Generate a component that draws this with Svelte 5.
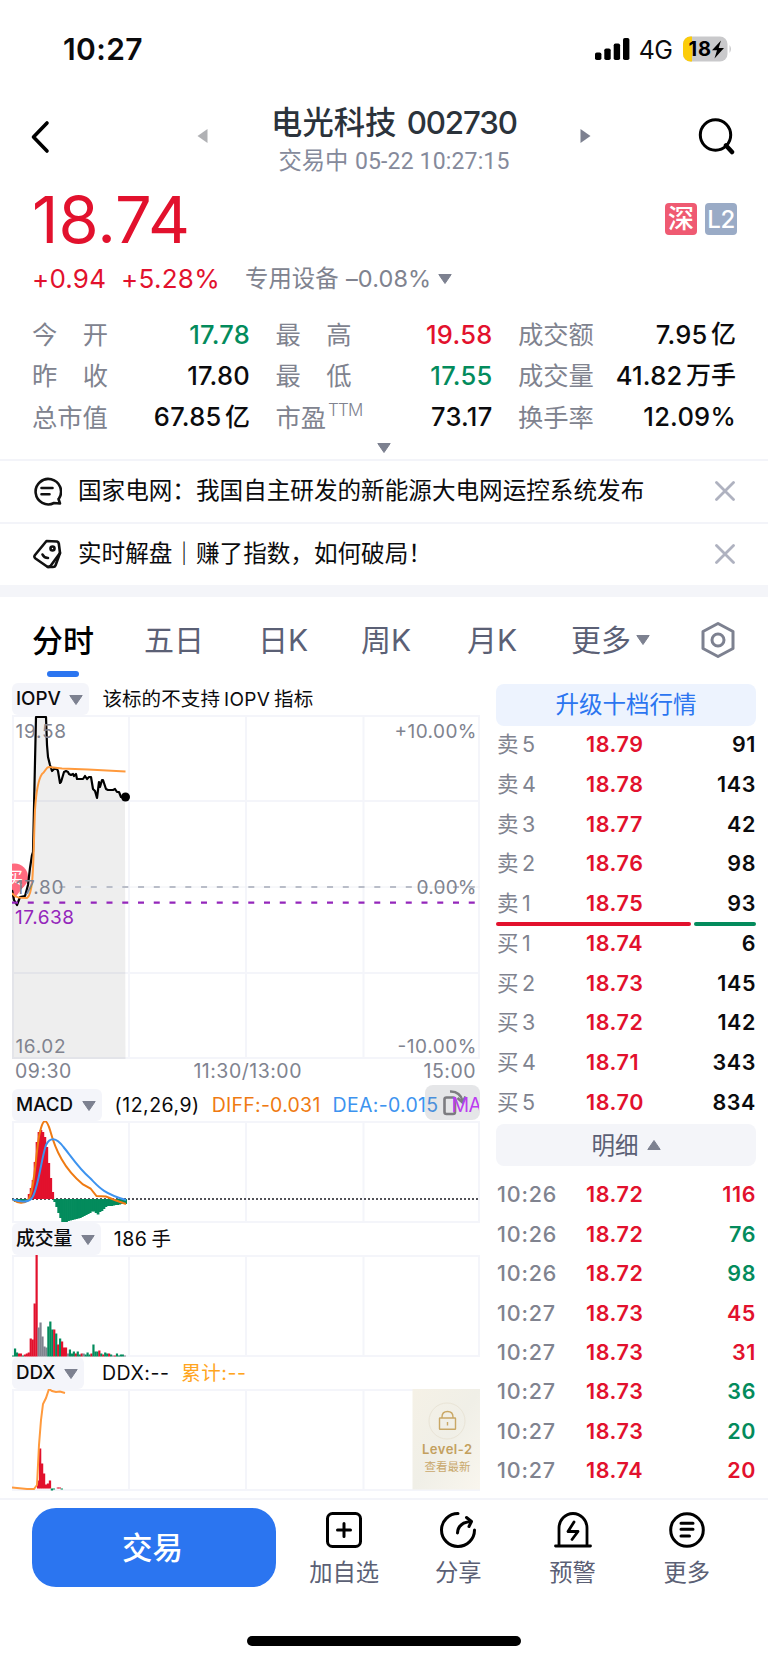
<script>
  const stats = [
    ['今开', '17.78', '', 'down'], ['最高', '19.58', '', 'up'], ['成交额', '7.95', '亿', ''],
    ['昨收', '17.80', '', ''], ['最低', '17.55', '', 'down'], ['成交量', '41.82', '万手', ''],
    ['总市值', '67.85', '亿', ''], ['市盈', '73.17', '', ''], ['换手率', '12.09%', '', '']
  ];
  const sells = [['5', '18.79', '91'], ['4', '18.78', '143'], ['3', '18.77', '42'], ['2', '18.76', '98'], ['1', '18.75', '93']];
  const buys = [['1', '18.74', '6'], ['2', '18.73', '145'], ['3', '18.72', '142'], ['4', '18.71', '343'], ['5', '18.70', '834']];
  const ticks = [
    ['10:26', '18.72', '116', 'up'], ['10:26', '18.72', '76', 'down'], ['10:26', '18.72', '98', 'down'],
    ['10:27', '18.73', '45', 'up'], ['10:27', '18.73', '31', 'up'], ['10:27', '18.73', '36', 'down'],
    ['10:27', '18.73', '20', 'down'], ['10:27', '18.74', '20', 'up']
  ];
  const RED = '#e2112d', GREEN = '#038b5c', GREY = '#80838f';
  const price = '12,890 14,900 17,905 20,897 25,896 28,885 30,868 32,855 33,852 36,717 46,717 47,745 48,757 50,765 52,771 54,769 57,769 58,771 60,783 61,782 64,772 66,771 68,772 69,774 71,775 73,774 74,776 76,774 77,779 80,779 83,779 85,776 87,779 89,777 91,777 93,789 95,791 97,798 99,782 100,787 102,780 103,780 106,789 108,790 113,790 115,789 117,792 119,792 121,797 125,797';
  // MACD bars: height above (positive) or below (negative) the zero line
  const macd = [-1, -3, -3, -4, -4, -4, -3, -2, 5, 11, 19, 37, 57, 67, 69, 67, 62, 52, 36, 21, 7, -3, -8, -14, -19, -23, -23, -23, -22, -21.5, -21, -20.5, -20, -19.5, -19, -18, -17, -16, -15, -14, -12.5, -12.5, -14, -15.5, -13, -12, -10, -8, -7, -7, -7, -6.5, -6, -6, -5.5, -5, -5, -5];
  // volume bars: colour code followed by height
  const vol = 'g1 g8 g4 r3 r3 g1 r2 r3 r4 r18 r17 r53 r102 y29 y34 y20 y10 y9 g30 g35 g27 r27 g23 r12 g18 r15 r9 r9 y3 g7 g3 g5 r3 g5 g2 r3 y3 g2 g4 g2 r3 g12 g5 g5 r6 g3 r2 g4 g3 r3 g2 y1 r1 g3 g1 g2 g2 y1'
    .split(' ').map((s) => ({ c: s[0] === 'g' ? GREEN : s[0] === 'r' ? RED : GREY, h: +s.slice(1) }));
  const ddx = [8, 40, 25, 15, 4, 5, 8, -2, -1, 0, 1, 1, -1];
</script>

{#snippet grid(y0, y1)}
  <path d={`M13 ${y0 + 1}H479M13 ${y1 - 1}H479M13 ${y0}V${y1}M129 ${y0}V${y1}M246 ${y0}V${y1}M363.500 ${y0}V${y1}M479 ${y0}V${y1}`} stroke="#f4f5fa" stroke-width="2" fill="none" />
{/snippet}
{#snippet tri()}
  <svg class="tri" width="14" height="10" viewBox="0 0 14 10"><path d="M.8.5H13.200L7 9.500Z" fill="#7d8190" stroke="#7d8190" stroke-linejoin="round" /></svg>
{/snippet}

<main>
  <div class="status">
    <b>10:27</b>
    <div class="sig">
      <svg width="36" height="24" viewBox="0 0 36 24"><rect x="0" y="15.500" width="6.400" height="7.500" rx="1.800" /><rect x="9.300" y="11.500" width="6.400" height="11.500" rx="1.800" /><rect x="18.700" y="6.500" width="6.400" height="16.500" rx="1.800" /><rect x="28" y="1" width="6.400" height="22" rx="1.800" /></svg>
      <span>4G</span>
      <svg class="bat" width="50" height="26" viewBox="0 0 50 26">
        <rect x="0" y=".5" width="44.500" height="25" rx="7.500" fill="#c9c9cb" /><path d="M7.500.5H9V25.500H7.500A7.500 7.500 0 0 1 0 18V8A7.500 7.500 0 0 1 7.500.5Z" fill="#fccc0a" /><path d="M46.500 9q3 4 0 8Z" fill="#c9c9cb" />
        <text x="5.500" y="20" font-size="20" font-weight="700" textLength="22.500">18</text><path d="M38 4.500 29 14.200H34L31.500 22.500 41 12H35.700Z" />
      </svg>
    </div>
  </div>

  <header>
    <svg class="back" width="20" height="34" viewBox="0 0 20 34"><path d="M17 3 3.500 17 17 31" fill="none" stroke="#000" stroke-width="3.600" stroke-linecap="round" stroke-linejoin="round" /></svg>
    <svg class="prev" width="11" height="14" viewBox="0 0 11 14"><path d="M10.500 0V14L.5 7Z" fill="#b0b1b4" /></svg>
    <div class="ttl">
      <h1>电光科技 <span>002730</span></h1>
      <p>交易中 <span>05-22 10:27:15</span></p>
    </div>
    <svg class="next" width="11" height="14" viewBox="0 0 11 14"><path d="M.5 0V14L10.500 7Z" fill="#7d8190" /></svg>
    <svg width="37" height="37" viewBox="0 0 37 37"><circle cx="17.500" cy="17" r="15.200" fill="none" stroke="#000" stroke-width="3" /><path d="M28 27.500 34 34" stroke="#000" stroke-width="4.500" stroke-linecap="round" /></svg>
  </header>

  <section class="quote">
    <div class="big"><strong>18.74</strong><div class="badges"><i>深</i><i class="l2">L2</i></div></div>
    <div class="chg"><span class="up a">+0.94</span><span class="up b">+5.28%</span><span class="sec">专用设备</span><span class="pct">–0.08%</span>{@render tri()}</div>
    <div class="stats">
      {#each stats as [k, v, u, c]}
        <div class="st"><span class="k">{#if k.length === 2 && k !== '市盈'}<i>{k[0]}</i><i>{k[1]}</i>{:else}{k}{/if}{#if k === '市盈'}<sup>TTM</sup>{/if}</span><span class={'v ' + c}>{v}{#if u}<em>{u}</em>{/if}</span></div>
      {/each}
    </div>
    <div class="more">{@render tri()}</div>
  </section>

  <div class="note">
    <svg width="30" height="30" viewBox="0 0 30 30" fill="none" stroke="#111" stroke-width="2.600" stroke-linecap="round" stroke-linejoin="round"><path d="M27 22.500A12.700 12.700 0 1 0 22 27L28 27.500 26.500 23" /><path d="M9.500 12H20.500M9.500 18.300H17.500" /></svg>
    <span>国家电网：我国自主研发的新能源大电网运控系统发布</span>
    <svg class="x" width="20" height="20" viewBox="0 0 20 20"><path d="M1.500 1.500 18.500 18.500M18.500 1.500 1.500 18.500" stroke="#afb2c0" stroke-width="2.800" stroke-linecap="round" /></svg>
  </div>
  <div class="note">
    <svg width="30" height="30" viewBox="0 0 30 30" fill="none" stroke="#111" stroke-width="2.600" stroke-linecap="round" stroke-linejoin="round"><path d="M14.500 2 25 2.500Q26.500 3 26.800 4.500L28 14 18.500 27Q17 28.500 15 27.500L3.500 19.500Q1.500 18 3 16Z" /><path d="M28 14 23.500 26.500Q23 28 21 28H16" /><path d="M10.500 15.500Q12 19 16 19" /><circle cx="20.500" cy="9.500" r="2" /></svg>
    <span>实时解盘｜赚了指数，如何破局！</span>
    <svg class="x" width="20" height="20" viewBox="0 0 20 20"><path d="M1.500 1.500 18.500 18.500M18.500 1.500 1.500 18.500" stroke="#afb2c0" stroke-width="2.800" stroke-linecap="round" /></svg>
  </div>
  <div class="band"></div>

  <nav>
    <span class="on">分时</span><span>五日</span><span>日K</span><span>周K</span><span>月K</span><span class="mr">更多{@render tri()}</span>
    <svg width="36" height="38" viewBox="0 0 36 38" fill="none" stroke="#7d8190" stroke-width="3"><path d="M18 2.500 33 10.500V27.500L18 35.500 3 27.500V10.500Z" stroke-linejoin="round" /><circle cx="18" cy="19" r="6" /></svg>
  </nav>

  <div class="body">
    <div class="charts">
      <div class="bar iopv"><span class="pill">IOPV{@render tri()}</span><span>该标的不支持<em class="lat">IOPV</em>指标</span></div>
      <svg width="468" height="344" viewBox="12 715 468 344">
        {@render grid(715, 1059)}
        <path d="M12 801H480M12 973H480" stroke="#f4f5fa" stroke-width="2" />
        <polygon points={price + ' 125.5,1059 12,1059'} fill="#000" fill-opacity=".068" />
        <path d="M59.300 887H480" stroke="#eef0f5" stroke-width="1" />
        <circle cx="14.500" cy="877" r="13.500" fill="#ff6a7f" /><path d="M6 886 14 899 24 886Z" fill="#ff6a7f" />
        <text x="6" y="884" font-size="17" fill="#fff">买</text>
        <polyline points={price} fill="none" stroke="#000" stroke-width="2.200" stroke-linejoin="round" />
        <path d="M12 893C15 898 20 898 27 898 34 894 33 860 35 810 36 794 38 780 42 774 46 771 46 767 49 767L62 768.500 88 769.500 125.500 771.500" fill="none" stroke="#ff9a3d" stroke-width="2" />
        <circle cx="125.500" cy="797" r="4.500" />
        <path d="M59.300 887H480" stroke="#b9bdc8" stroke-width="2" stroke-dasharray="6 9.750" />
        <path d="M12 902.700H476" stroke="#9426bb" stroke-width="2.200" stroke-dasharray="6 9.750" />
        <g font-size="19" fill="#80838f">
          <text x="15.500" y="738" textLength="50.500">19.58</text><text x="476.500" y="738" text-anchor="end" textLength="82">+10.00%</text>
          <text x="15.500" y="894" textLength="48">17.80</text><text x="476.500" y="894" text-anchor="end" textLength="60">0.00%</text>
          <text x="15" y="923.500" textLength="59" fill="#9426bb">17.638</text>
          <text x="15.500" y="1052.500" textLength="50">16.02</text><text x="476.500" y="1052.500" text-anchor="end" textLength="79">-10.00%</text>
        </g>
      </svg>
      <div class="axis"><span>09:30</span><span>11:30/13:00</span><span>15:00</span></div>
      <div class="bar macd"><span class="pill">MACD{@render tri()}</span><span>(12,26,9)</span><span class="diff">DIFF:-0.031</span><span class="dea">DEA:-0.015</span><span class="ma">MA</span>
        <div class="rot"><svg width="55" height="35" viewBox="0 0 55 35" fill="none" stroke="#7c7c80" stroke-width="2.600"><rect x="19.500" y="12.500" width="10.500" height="16.500" rx="2" /><path d="M25 6.500Q35 6 37.500 16" /><path d="M32.500 13 37.500 17.500 40.500 11.500" /></svg></div>
      </div>
      <svg width="468" height="102" viewBox="12 1121 468 102">
        {@render grid(1121, 1223)}
        <path d="M12 1199H480" stroke="#1a1a22" stroke-width="1.500" stroke-dasharray="2 2" />
        {#each macd as h, i}<rect x={12 + i * 1.97} y={h > 0 ? 1199 - h : 1199} width="2.700" height={Math.abs(h)} fill={h > 0 ? RED : GREEN} />{/each}
        <path d="M12.700 1199.500C18 1203.500 24 1204 28 1200 35 1192 36 1146 40 1132 43 1119 46 1117 50 1130 53 1141 58 1153 61.500 1159 66 1167 74 1177 83 1184.500L90.500 1188.500 96.500 1196 106 1196.500 116 1200.500 126 1204" fill="none" stroke="#ef7a12" stroke-width="2" />
        <path d="M12.700 1199.500C20 1202 28 1202.500 32 1198 38 1190 41 1160 46 1145 50 1137 56 1137 63.500 1147 70 1155 80 1170 90 1178 98 1186 102 1193 126 1200" fill="none" stroke="#3d93ef" stroke-width="2" />
      </svg>
      <div class="bar vol"><span class="pill">成交量{@render tri()}</span><span>186<em>手</em></span></div>
      <svg width="468" height="102" viewBox="12 1255 468 102">
        {@render grid(1255, 1357)}
        {#each vol as b, i}<rect x={12 + i * 1.96} y={1356.5 - b.h} width="2.200" height={b.h} fill={b.c} />{/each}
      </svg>
      <div class="bar ddx"><span class="pill">DDX{@render tri()}</span><span>DDX:--</span><span class="cum">累计:--</span></div>
      <svg width="468" height="102" viewBox="12 1389 468 102">
        <defs><linearGradient id="gold" x2="1" y2="1"><stop stop-color="#f5f1e6" /><stop offset=".5" stop-color="#f0efe7" /><stop offset="1" stop-color="#f9f6ee" /></linearGradient></defs>
        {@render grid(1389, 1491)}
        {#each ddx as h, i}<rect x={37 + i * 1.97} y={h > 0 ? 1488.500 - h : 1488.500} width="2.300" height={Math.abs(h)} fill={h > 0 ? RED : GREEN} />{/each}
        <path d="M12 1487.500 17 1488 27 1489H34L37 1485 39 1445 41 1420 43 1404 46 1398 49 1389 52 1391 56 1392 60 1391.500 65 1393" fill="none" stroke="#ff9a3d" stroke-width="2" />
        <rect x="412.500" y="1389" width="67.500" height="100.500" fill="url(#gold)" />
        <circle cx="447" cy="1421" r="18" fill="none" stroke="#e9e4d6" />
        <g fill="none" stroke="#c9a765" stroke-width="1.400"><rect x="439.500" y="1418" width="16" height="11.300" rx=".5" /><path d="M442 1418V1417Q442 1411.500 447.500 1411.500T453 1417V1418M447.500 1422V1425.500" /></g>
        <text x="422" y="1454" font-size="13" font-weight="600" fill="#c3a05e" textLength="50">Level-2</text>
        <text x="424.500" y="1471" font-size="11.500" fill="#c9a86c" textLength="46">查看最新</text>
      </svg>
    </div>

    <aside>
      <div class="btn up10">升级十档行情</div>
      {#each sells as [n, p, q]}<div class="row"><span>卖<em>{n}</em></span><b>{p}</b><b class="q">{q}</b></div>{/each}
      <div class="ratio"><i></i><i></i></div>
      {#each buys as [n, p, q]}<div class="row"><span>买<em>{n}</em></span><b>{p}</b><b class="q">{q}</b></div>{/each}
      <div class="btn det">明细<svg width="14" height="10" viewBox="0 0 14 10"><path d="M.8 9.500H13.200L7 .5Z" fill="#7d8190" stroke="#7d8190" stroke-linejoin="round" /></svg></div>
      {#each ticks as [t, p, q, c]}<div class="row tick"><span>{t}</span><b>{p}</b><b class={'q ' + c}>{q}</b></div>{/each}
    </aside>
  </div>

  <footer>
    <button>交易</button>
    <div class="act">
      <svg width="40" height="38" viewBox="0 0 40 38" fill="none" stroke="#000" stroke-width="3" stroke-linecap="round"><rect x="3.500" y="2.500" width="33" height="33" rx="5" /><path d="M20 12.500V25.500M13.500 19H26.500" /></svg><span>加自选</span>
    </div>
    <div class="act">
      <svg width="40" height="38" viewBox="0 0 40 38" fill="none" stroke="#000" stroke-width="3" stroke-linecap="round" stroke-linejoin="round"><path d="M20 2.500A16.500 16.500 0 1 0 36.500 19" /><path d="M19.500 22Q20 11.500 33 10.500M28.500 6.500 33.500 10.500 31 15.500" /></svg><span>分享</span>
    </div>
    <div class="act">
      <svg width="40" height="38" viewBox="0 0 40 38" fill="none" stroke="#000" stroke-width="2.800" stroke-linecap="round" stroke-linejoin="round"><path d="M2.500 35H37.500M6 34.500V17A14 14.500 0 0 1 34 17V34.500" /><path d="M21 11 15 20.500H25L19 28.500" /></svg><span>预警</span>
    </div>
    <div class="act">
      <svg width="40" height="38" viewBox="0 0 40 38" fill="none" stroke="#000" stroke-width="3" stroke-linecap="round"><circle cx="20" cy="19" r="16.300" /><path d="M14 12.300H26M14 18.300H26M14 25H22.500" /></svg><span>更多</span>
    </div>
  </footer>
  <div class="home"><i></i></div>
</main>

<style>
  :global(body) { background: #fff; }
  main { width: 768px; height: 1663px; overflow: hidden; display: flex; flex-direction: column; font-family: Inter, "Noto Sans CJK SC", sans-serif; color: #0b0b0d; line-height: 1; }
  main :global(*) { box-sizing: border-box; }
  i, em { font-style: normal; }
  svg { flex: none; display: block; }
  .up { color: #e2112d; }
  .down { color: #038b5c; }
  .status { height: 98px; display: flex; justify-content: space-between; align-items: center; padding: 0 35px 0 63px; }
  .status b { font-size: 30px; font-weight: 600; letter-spacing: .4px; }
  .sig { display: flex; align-items: center; }
  .sig span { font-size: 25px; margin: 2px 11px 0 8px; letter-spacing: -.8px; }
  header { height: 86px; display: flex; align-items: center; padding: 0 33px 10px 30px; }
  .back { margin-top: 1px; }
  .prev { margin-left: 147px; }
  .ttl { flex: 1; text-align: center; padding-top: 11px; }
  h1 { margin: 0; font-size: 31.300px; font-weight: 500; line-height: 38px; color: #2b333b; white-space: nowrap; }
  h1 span { letter-spacing: -1.100px; margin-left: 2px; }
  p { margin: 0; font-size: 23.300px; line-height: 37px; color: #858a9b; white-space: nowrap; }
  p span { font-family: Roboto, sans-serif; font-size: 23px; letter-spacing: .15px; }
  .next { margin-right: 107px; }
  .quote { height: 275px; padding: 0 32px; }
  .big { height: 70px; display: flex; justify-content: space-between; align-items: center; }
  strong { font-size: 65px; font-weight: 400; color: #e2112d; letter-spacing: 0; }
  .badges { display: flex; gap: 8px; margin-right: -1px; }
  .badges i { width: 32px; height: 32px; border-radius: 4px; background: #ef5a72; color: #fff; font-size: 26px; line-height: 31px; text-align: center; font-weight: 500; }
  .badges .l2 { background: #9aabc6; font-size: 24px; line-height: 33px; letter-spacing: -.5px; }
  .chg { height: 50px; display: flex; align-items: center; font-size: 26px; white-space: nowrap; }
  .chg .a { width: 89px; letter-spacing: .2px; }
  .chg .b { width: 124px; letter-spacing: .3px; }
  .chg .sec { width: 101px; font-size: 23.400px; color: #80838f; }
  .chg .pct { width: 92px; font-size: 23.500px; letter-spacing: .1px; color: #80838f; }
  .stats { display: grid; grid-template-columns: 217px 216px 217px; column-gap: 26.500px; grid-auto-rows: 41.300px; padding-top: 10px; }
  .st { display: flex; justify-content: space-between; align-items: center; white-space: nowrap; }
  .k { width: 76px; display: flex; justify-content: space-between; font-size: 25.300px; color: #80838f; }
  .k sup { font-size: 17px; line-height: 1; font-weight: 300; letter-spacing: -.8px; margin: -3px -9px 0 2px; }
  .v { font-size: 25.500px; font-weight: 500; letter-spacing: .25px; display: flex; align-items: center; margin-right: -1px; }
  .v em { font-size: 25px; margin-left: 3.500px; letter-spacing: 0; }
  .more { display: flex; justify-content: center; padding-top: 5px; }
  .note { height: 63px; border-top: 2px solid #f3f4f9; display: flex; align-items: center; padding: 0 33px 2px 32px; }
  .note span { flex: 1; margin-left: 16px; font-size: 23.600px; white-space: nowrap; }
  .band { height: 12px; background: #f4f5f9; }
  nav { height: 84px; display: grid; grid-template-columns: 112px 114px 103px 106px 104px 129px 36px; align-items: center; padding: 2px 0 0 32px; font-size: 30px; color: #5b6075; }
  nav span { white-space: nowrap; }
  nav .on { color: #000; font-weight: 500; width: 62px; display: flex; flex-direction: column; align-items: center; font-size: 31px; padding-top: 22px; }
  nav .on::after { content: ''; width: 32px; height: 6px; border-radius: 3px; background: #2b75f0; margin-top: 15px; }
  nav .mr { display: flex; align-items: center; gap: 5px; }
  .body { display: flex; height: 817px; padding: 2px 12px 0; justify-content: space-between; }
  .charts { width: 469px; }
  .bar { height: 32px; display: flex; align-items: center; font-size: 19.500px; letter-spacing: .5px; white-space: nowrap; position: relative; padding-top: 1px; }
  .pill { height: 32px; display: flex; align-items: center; gap: 8.500px; padding: 1px 6px 0 4px; border-radius: 6px; background: #f4f5fa; margin: -1px 13px 0 0; font-weight: 500; font-size: 18.800px; letter-spacing: 0; }
  .iopv { letter-spacing: .1px; }
  .lat { margin: 0 4px; letter-spacing: .3px; font-size: 19px; }
  .axis { height: 30px; padding: 0 5px 4px 3px; display: flex; justify-content: space-between; align-items: center; font-size: 19.500px; color: #80838f; letter-spacing: .5px; }
  .macd .diff { color: #ef7a12; margin-left: 12px; letter-spacing: .25px; }
  .macd .dea { color: #3d93ef; margin-left: 12px; letter-spacing: .3px; }
  .macd .ma { color: #bb3cf0; margin-left: 13px; z-index: 1; letter-spacing: -.5px; width: 28px; overflow: hidden; }
  .rot { position: absolute; right: 1px; top: -4px; width: 55px; height: 35px; background: rgba(125, 128, 140, .2); border-radius: 8px; }
  .vol em { margin-left: 4px; }
  .ddx .pill { margin-right: 18px; }
  .ddx .cum { color: #ffa51e; margin-left: 12px; }
  aside { width: 260px; padding-top: 1px; }
  .btn { height: 41.500px; border-radius: 8px; display: flex; align-items: center; justify-content: center; font-size: 23.500px; }
  .up10 { background: #edf3fe; color: #2b75f0; margin-bottom: -.5px; }
  .det { background: #f4f5f9; color: #5b6075; gap: 8px; margin: 1.500px 0 10px; padding-top: 1px; }
  .row { height: 39.750px; display: grid; grid-template-columns: 89px 1fr auto; align-items: center; font-size: 21.500px; color: #80838f; letter-spacing: .6px; padding-left: 1px; }
  .row span em { margin-left: 3px; }
  .row b { color: #e2112d; font-weight: 600; }
  .row .q { color: #0b0b0d; }
  .row .q.up { color: #e2112d; }
  .row .q.down { color: #038b5c; }
  .tick { height: 39.400px; }
  .tick span { font-weight: 500; letter-spacing: .8px; }
  .ratio { display: flex; gap: 3px; height: 4px; margin: -2px 0; }
  .ratio i { width: 195px; background: #e2112d; border-radius: 2px; }
  .ratio i + i { width: auto; flex: 1; background: #038b5c; }
  footer { height: 120px; border-top: 2px solid #f3f4f9; display: flex; padding: 8px 24px 0 32px; }
  button { width: 244px; height: 79px; border: 0; border-radius: 24px; background: #2b75f0; color: #fff; font: 500 30.500px/1 Inter, "Noto Sans CJK SC", sans-serif; margin-right: 11px; padding: 1px 3px 0 0; }
  .act { width: 114.300px; display: flex; flex-direction: column; align-items: center; padding-top: 3px; font-size: 23.300px; color: #5b6075; }
  .act span { margin-top: 12px; }
  .home { display: flex; justify-content: center; padding-top: 18px; }
  .home i { width: 274px; height: 10px; border-radius: 5px; background: #000; }
</style>
